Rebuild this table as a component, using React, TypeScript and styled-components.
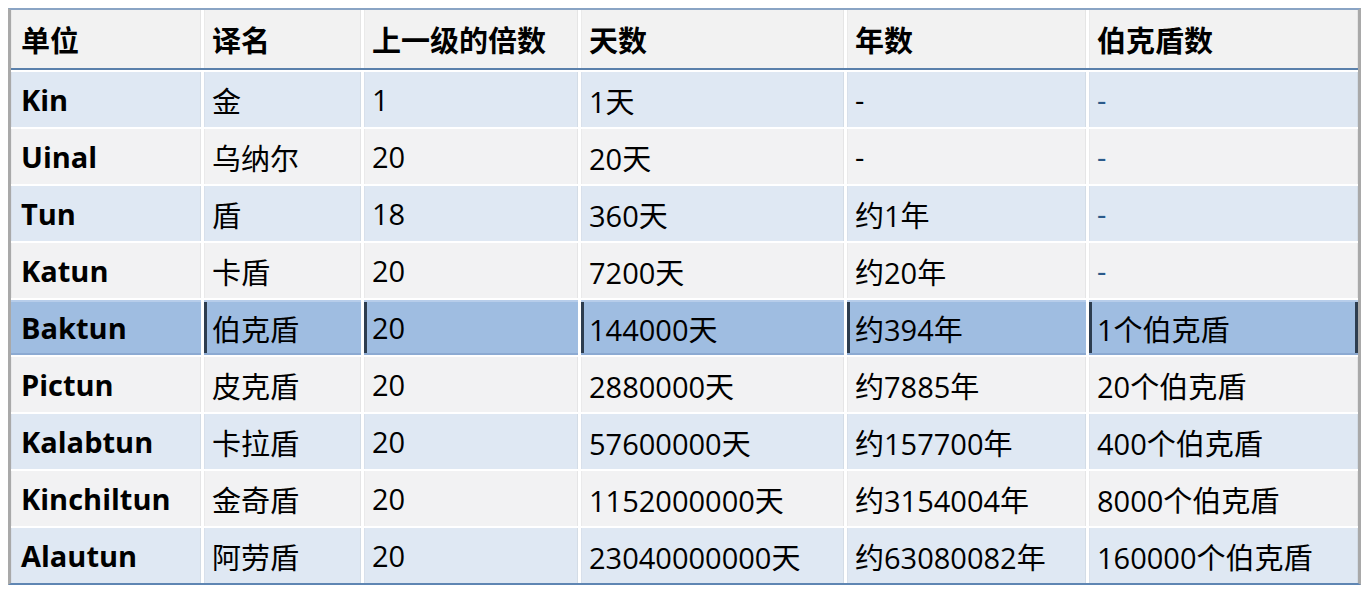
import React from "react";
import styled, { createGlobalStyle, css } from "styled-components";

const GlobalStyle = createGlobalStyle`
	html, body {
		margin: 0;
		padding: 0;
		background: #ffffff;
	}
	body {
		font-family: "Open Sans", "Noto Sans CJK SC", sans-serif;
		color: #000000;
	}
`;

type Tone = "head" | "blue" | "gray" | "hl";

const TONES: Record<Tone, string> = {
	head: "#f2f2f2",
	blue: "#dfe8f3",
	gray: "#f2f2f3",
	hl: "#9fbde1",
};

const Page = styled.div`
	padding: 8px 0 0 8px;
`;

const Frame = styled.div`
	width: 1347px;
	border-left: 3px solid #a9a9a9;
	border-right: 3px solid #a9a9a9;
	border-top: 2px solid #8aa4c4;
	border-bottom: 2px solid #5f86b3;
	display: flex;
	flex-direction: column;
	row-gap: 2px;
`;

const Row = styled.div<{ $head?: boolean }>`
	display: grid;
	grid-template-columns: 190px 157px 214px 263px 239px 269px;
	column-gap: 3px;
	height: ${(p) => (p.$head ? "58px" : "55px")};
	${(p) =>
		p.$head &&
		css`
			border-bottom: 2px solid #5a80ab;
		`}
`;

const Cell = styled.div<{ $tone: Tone; $bold?: boolean; $first?: boolean; $last?: boolean }>`
	display: flex;
	align-items: center;
	padding-left: ${(p) => (p.$first ? "10px" : "8px")};
	background: ${(p) => TONES[p.$tone]};
	font-size: 29px;
	font-weight: ${(p) => (p.$bold ? 700 : 400)};
	white-space: nowrap;
	box-shadow: inset -1px 0 0 rgba(0, 0, 0, 0.05), inset 1px 0 0 rgba(0, 0, 0, 0.03);
	${(p) =>
		p.$tone === "hl" &&
		css`
			box-shadow: inset 0 2px 0 #b7cdea, inset 0 -2px 0 #8caad2
				${p.$first ? "" : ", inset 3px 0 0 #2d3d4f"} ${p.$last ? ", inset -3px 0 0 #2d3d4f" : ""};
		`}
`;

const Dash = styled.span<{ $blue?: boolean }>`
	color: ${(p) => (p.$blue ? "#2b5a8a" : "#000000")};
`;

const HEAD = ["单位", "译名", "上一级的倍数", "天数", "年数", "伯克盾数"];

const ROWS: string[][] = [
	["Kin", "金", "1", "1天", "-", "-"],
	["Uinal", "乌纳尔", "20", "20天", "-", "-"],
	["Tun", "盾", "18", "360天", "约1年", "-"],
	["Katun", "卡盾", "20", "7200天", "约20年", "-"],
	["Baktun", "伯克盾", "20", "144000天", "约394年", "1个伯克盾"],
	["Pictun", "皮克盾", "20", "2880000天", "约7885年", "20个伯克盾"],
	["Kalabtun", "卡拉盾", "20", "57600000天", "约157700年", "400个伯克盾"],
	["Kinchiltun", "金奇盾", "20", "1152000000天", "约3154004年", "8000个伯克盾"],
	["Alautun", "阿劳盾", "20", "23040000000天", "约63080082年", "160000个伯克盾"],
];

function toneFor(i: number): Tone {
	if (i === 4) return "hl";
	return i % 2 === 0 ? "blue" : "gray";
}

export default function App() {
	return (
		<>
			<GlobalStyle />
			<Page>
				<Frame>
					<Row $head>
						{HEAD.map((h, i) => (
							<Cell key={h} $tone="head" $bold $first={i === 0}>
								{h}
							</Cell>
						))}
					</Row>
					{ROWS.map((r, i) => (
						<Row key={r[0]}>
							{r.map((v, j) => (
								<Cell key={j} $tone={toneFor(i)} $bold={j === 0} $first={j === 0} $last={j === 5}>
									{v === "-" ? <Dash $blue={j === 5}>-</Dash> : v}
								</Cell>
							))}
						</Row>
					))}
				</Frame>
			</Page>
		</>
	);
}
